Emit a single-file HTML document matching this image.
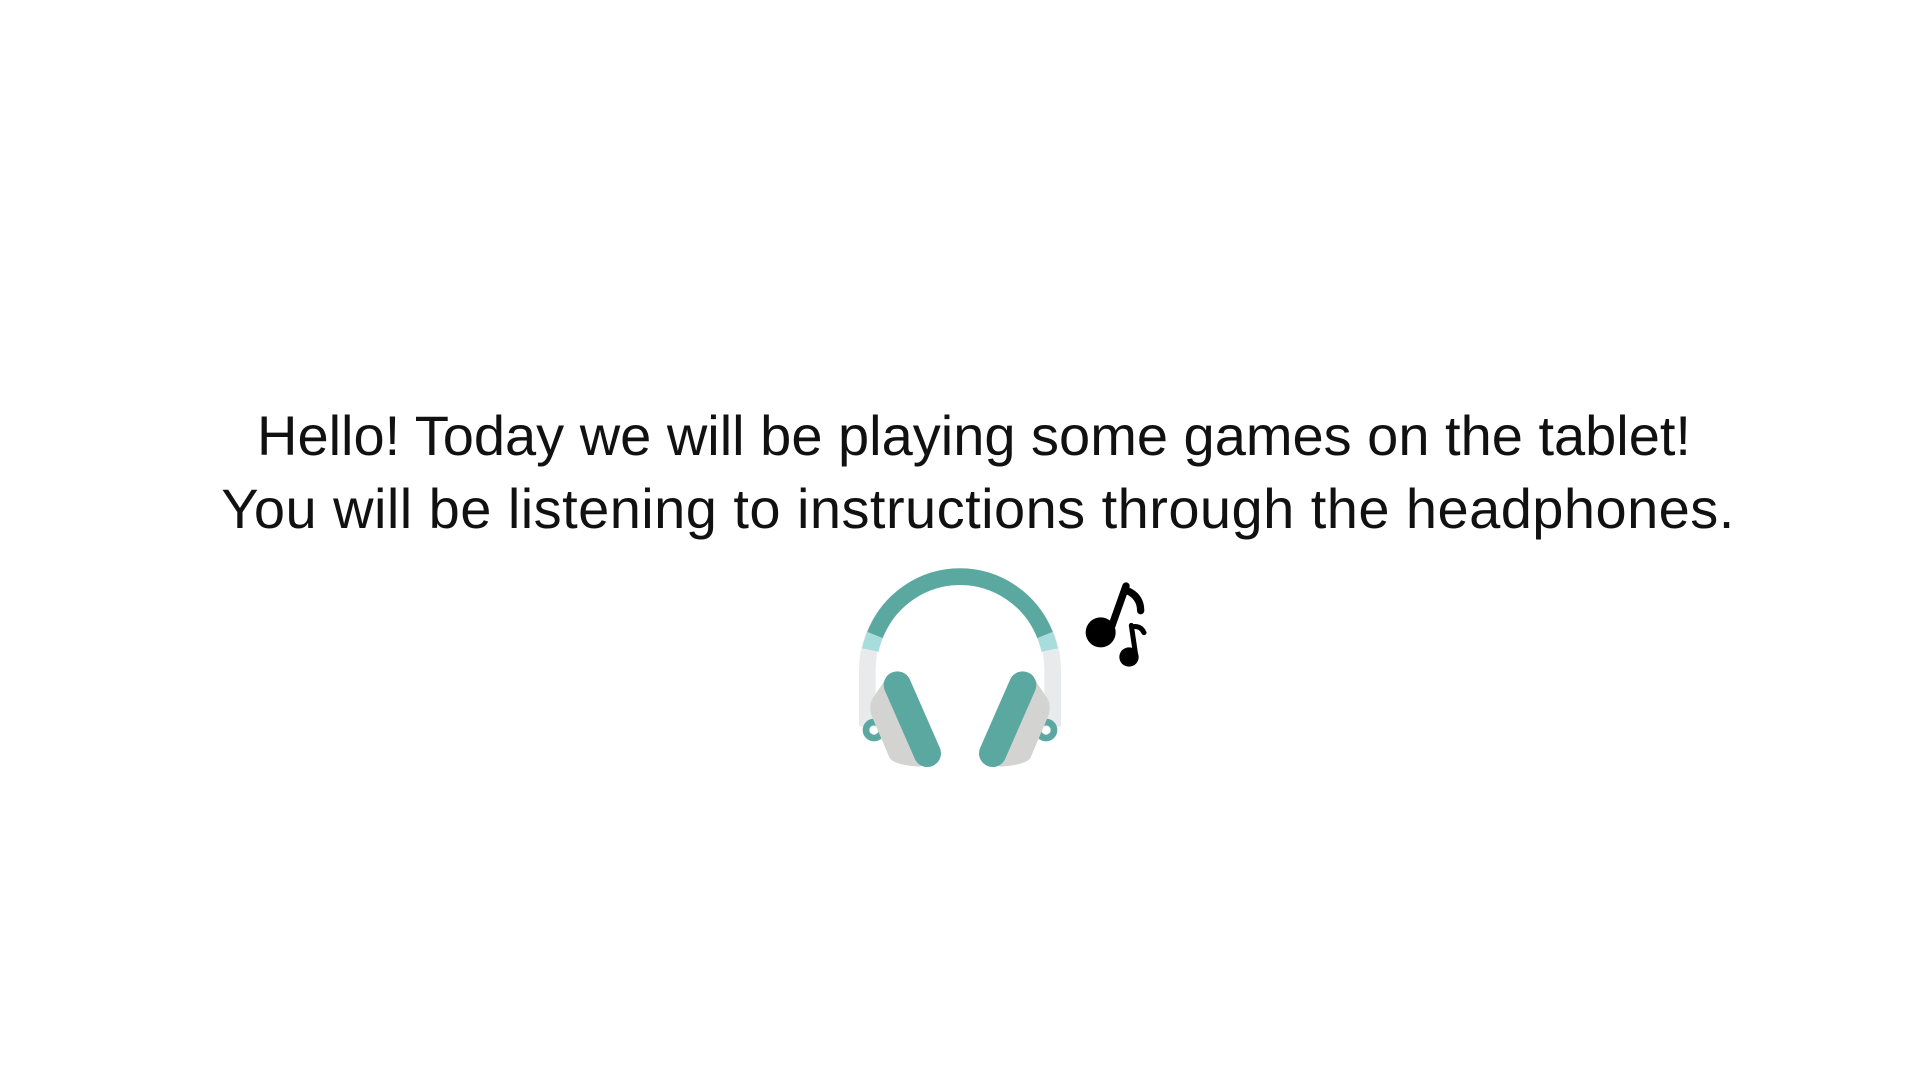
<!DOCTYPE html>
<html><head><meta charset="utf-8"><style>
html,body{margin:0;padding:0;background:#fff;width:1920px;height:1080px;overflow:hidden}
.t{position:absolute;left:14px;width:1920px;text-align:center;font-family:"Liberation Sans",sans-serif;font-size:56px;color:#111;white-space:nowrap}
</style></head><body>
<div class="t" style="top:406px;line-height:60px;letter-spacing:0px">Hello! Today we will be playing some games on the tablet!</div>
<div class="t" style="top:479px;line-height:60px;letter-spacing:0.45px;left:18px">You will be listening to instructions through the headphones.</div>
<svg style="position:absolute;left:840px;top:550px" width="320" height="230" viewBox="0 0 960 690">
<path d="M82 530 L82 360 A278 280 0 0 1 638 360 L638 530" fill="none" stroke="#e8eaeb" stroke-width="50"/>
<path d="M91 300 A275 280 0 0 1 105 255 M615 255 A275 280 0 0 1 629 300" fill="none" stroke="#a8dcdd" stroke-width="50"/>
<path d="M105 255 A275 280 0 0 1 615 255" fill="none" stroke="#5ba8a1" stroke-width="50"/>
<circle cx="102" cy="540" r="24" fill="none" stroke="#5ba8a1" stroke-width="20"/>
<circle cx="618" cy="540" r="24" fill="none" stroke="#5ba8a1" stroke-width="20"/>
<g id="cup">
<path d="M135 390 L96 448 Q86 470 96 500 L148 622 Q160 645 240 650 L262 640 L190 390 Z" fill="#d3d3d2"/>
<line x1="172" y1="405" x2="262" y2="610" stroke="#5ba8a1" stroke-width="82" stroke-linecap="round"/>
</g>
<use href="#cup" transform="translate(720,0) scale(-1,1)"/>
<circle cx="782" cy="247" r="45" fill="#000"/>
<path d="M814 232 L858 108 M862 122 Q902 140 902 182" fill="none" stroke="#000" stroke-width="22" stroke-linecap="round"/>
<circle cx="867" cy="321" r="29" fill="#000"/>
<path d="M886 308 L874 226 M877 230 Q902 226 912 248" fill="none" stroke="#000" stroke-width="15" stroke-linecap="round"/>
</svg>
</body></html>
